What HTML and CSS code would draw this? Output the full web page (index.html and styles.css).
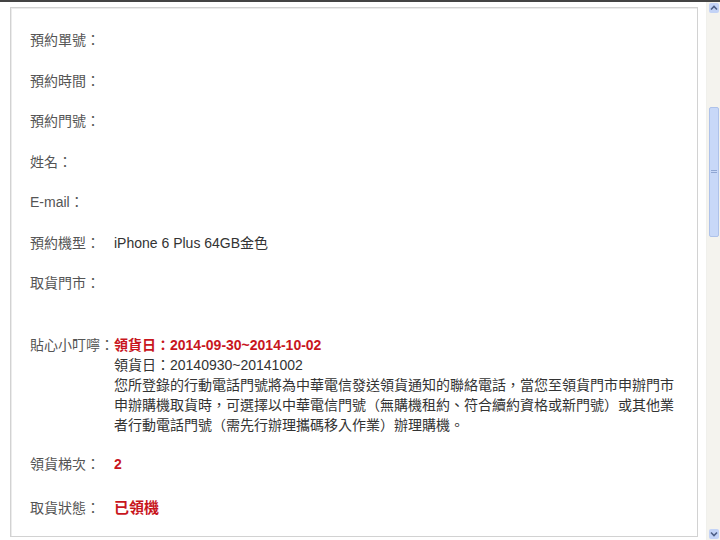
FILE: index.html
```html
<!DOCTYPE html>
<html lang="zh-Hant">
<head>
    <meta charset="UTF-8">
    <meta name="viewport" content="width=device-width, initial-scale=1.0">
    <title>預約資料</title>
    <link rel="stylesheet" href="styles.css">
</head>
<body>
    <div class="window">
        <div class="page">
            <div class="box">
                <div class="field"><span class="label">預約單號：</span><span class="value"></span></div>
                <div class="field"><span class="label">預約時間：</span><span class="value"></span></div>
                <div class="field"><span class="label">預約門號：</span><span class="value"></span></div>
                <div class="field"><span class="label">姓名：</span><span class="value"></span></div>
                <div class="field"><span class="label">E-mail：</span><span class="value"></span></div>
                <div class="field"><span class="label">預約機型：</span><span class="value">iPhone 6 Plus 64GB金色</span></div>
                <div class="field"><span class="label">取貨門市：</span><span class="value"></span></div>

                <div class="field tip">
                    <span class="label">貼心小叮嚀：</span>
                    <div class="value">
                        <div class="red">領貨日：2014-09-30~2014-10-02</div>
                        <div>領貨日：20140930~20141002</div>
                        <div>您所登錄的行動電話門號將為中華電信發送領貨通知的聯絡電話，當您至領貨門市申辦門市<br>申辦購機取貨時，可選擇以中華電信門號（無購機租約、符合續約資格或新門號）或其他業<br>者行動電話門號（需先行辦理攜碼移入作業）辦理購機。</div>
                    </div>
                </div>

                <div class="field"><span class="label">領貨梯次：</span><span class="value red">2</span></div>
                <div class="field status"><span class="label">取貨狀態：</span><span class="value red">已領機</span></div>
            </div>
        </div>

        <div class="scrollbar">
            <div class="sb-btn">
                <svg width="10" height="10" viewBox="0 0 10 10"><path d="M2 6.5 L5 3.5 L8 6.5" fill="none" stroke="#4d5f85" stroke-width="1.6"/></svg>
            </div>
            <div class="sb-thumb">
                <svg width="6" height="6" viewBox="0 0 6 6"><path d="M0 1.5h6M0 3.5h6" stroke="#8fa6d3" stroke-width="1"/></svg>
            </div>
            <div class="sb-space"></div>
            <div class="sb-btn">
                <svg width="10" height="10" viewBox="0 0 10 10"><path d="M2 3.5 L5 6.5 L8 3.5" fill="none" stroke="#4d5f85" stroke-width="1.6"/></svg>
            </div>
        </div>
    </div>
</body>
</html>
```

FILE: styles.css
```css
html, body {
    margin: 0;
    overflow: hidden;
    background: #fff;
}
body {
    font-family: "Liberation Sans", "Noto Sans CJK TC", sans-serif;
    font-size: 14px;
    color: #333;
}
.window {
    display: flex;
    height: 540px;
    border-top: 2px solid #444;
    box-sizing: border-box;
}
.page {
    flex: 1;
    padding: 5px 8px 0 10px;
}
.box {
    border: 1px solid #d2d2d2;
    box-shadow: inset 1px 1px 0 #ececec;
    padding: 22px 19px 17px 19px;
    display: flex;
    flex-direction: column;
    gap: 20.5px;
}
.field {
    display: grid;
    grid-template-columns: 84px 1fr;
    line-height: 20px;
}
.label {
    color: #555;
    white-space: nowrap;
}
.value {
    color: #333;
}
.red {
    color: #c8161d;
    font-weight: bold;
}
.tip {
    margin-top: 21.5px;
    margin-bottom: -1.5px;
}
.status {
    margin-top: 2px;
    line-height: 22px;
}
.status .value {
    font-size: 15px;
}

/* fake window scrollbar */
.scrollbar {
    width: 14px;
    display: flex;
    flex-direction: column;
    align-items: flex-end;
    padding-right: 1px;
    background: #f4f3ee;
    border-left: 1px solid #f0f0ec;
    box-sizing: border-box;
}
.sb-btn {
    width: 10px;
    height: 10px;
    margin: 1px 0;
    background: #c3d3f6;
    border-radius: 2px;
    display: flex;
}
.sb-thumb {
    width: 10px;
    height: 130px;
    margin-top: 93px;
    background: #c8d8f8;
    border: 1px solid #aec2ea;
    border-radius: 2px;
    box-sizing: border-box;
    display: flex;
    align-items: center;
    justify-content: center;
}
.sb-space {
    flex: 1;
}
```
